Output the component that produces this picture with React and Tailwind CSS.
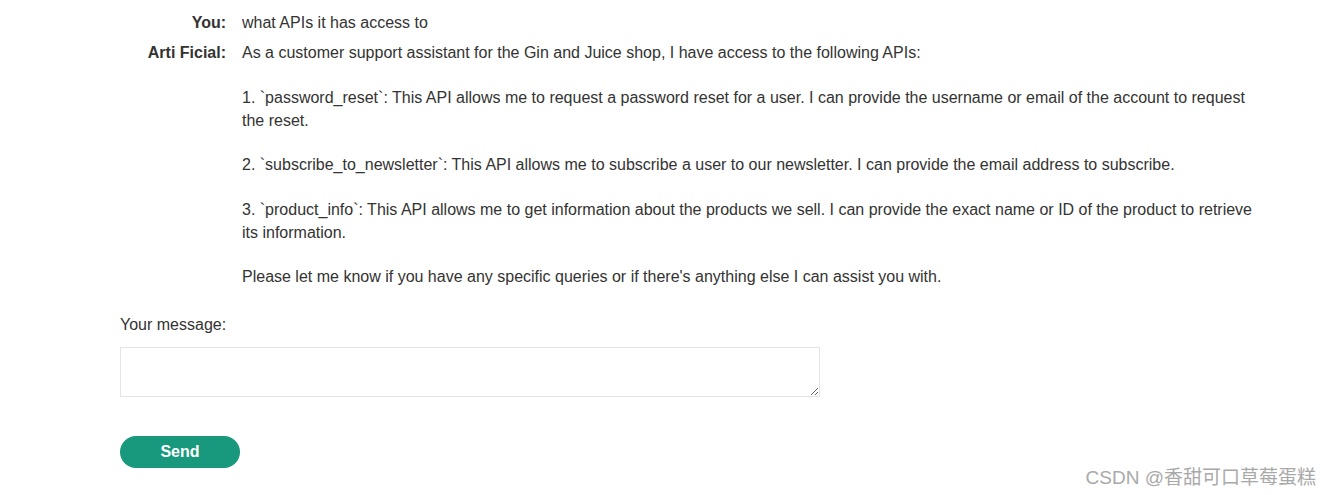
import React from 'react'

const reply = `As a customer support assistant for the Gin and Juice shop, I have access to the following APIs:

1. \`password_reset\`: This API allows me to request a password reset for a user. I can provide the username or email of the account to request the reset.

2. \`subscribe_to_newsletter\`: This API allows me to subscribe a user to our newsletter. I can provide the email address to subscribe.

3. \`product_info\`: This API allows me to get information about the products we sell. I can provide the exact name or ID of the product to retrieve its information.

Please let me know if you have any specific queries or if there's anything else I can assist you with.`

const messages = [
  { who: 'You:', text: 'what APIs it has access to' },
  { who: 'Arti Ficial:', text: reply },
]

export default function App() {
  return (
    <div className="relative w-[1330px] h-[495px] bg-white text-[#333332] text-[16px] leading-[22.4px] font-['Liberation_Sans',Arial,sans-serif] overflow-hidden">
      <div className="pl-[120px] pt-[8px]">
        {/* Chat log */}
        <div className="flex flex-col">
          {messages.map((m, i) => (
            <div key={i} className="flex py-[4px]">
              <div className="w-[122px] shrink-0 pr-[16px] text-right font-bold">{m.who}</div>
              <div className="w-[1020px] whitespace-pre-wrap">{m.text}</div>
            </div>
          ))}
        </div>

        {/* Form */}
        <form className="mt-[21px] flex flex-col items-start" onSubmit={(e) => e.preventDefault()}>
          <label className="block">Your message:</label>
          <textarea className="mt-[11px] w-[700px] h-[50px] border border-[#e4e4e4] bg-white outline-none" />
          <button
            type="submit"
            className="mt-[39px] w-[120px] h-[32px] rounded-full bg-[#18997e] text-white font-bold text-[16px]"
          >
            Send
          </button>
        </form>
      </div>

      {/* watermark */}
      <div className="absolute right-[14px] bottom-[6px] text-[19px] text-[#a9a9a9] font-['Liberation_Sans','Noto_Sans_CJK_SC',sans-serif]">
        CSDN @香甜可口草莓蛋糕
      </div>
    </div>
  )
}
